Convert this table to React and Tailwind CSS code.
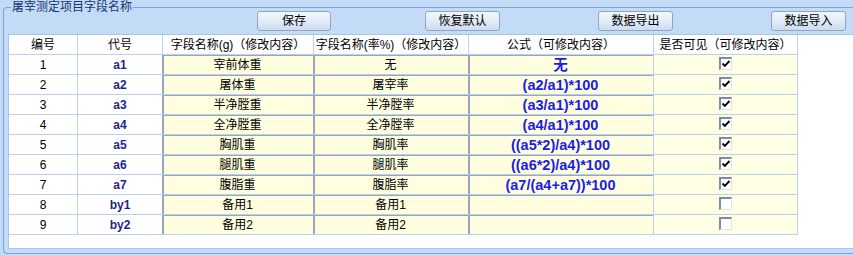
import React from "react";

const rows = [
  { n: "1", code: "a1", g: "宰前体重", r: "无", f: "无", c: true },
  { n: "2", code: "a2", g: "屠体重", r: "屠宰率", f: "(a2/a1)*100", c: true },
  { n: "3", code: "a3", g: "半净膛重", r: "半净膛率", f: "(a3/a1)*100", c: true },
  { n: "4", code: "a4", g: "全净膛重", r: "全净膛率", f: "(a4/a1)*100", c: true },
  { n: "5", code: "a5", g: "胸肌重", r: "胸肌率", f: "((a5*2)/a4)*100", c: true },
  { n: "6", code: "a6", g: "腿肌重", r: "腿肌率", f: "((a6*2)/a4)*100", c: true },
  { n: "7", code: "a7", g: "腹脂重", r: "腹脂率", f: "(a7/(a4+a7))*100", c: true },
  { n: "8", code: "by1", g: "备用1", r: "备用1", f: "", c: false },
  { n: "9", code: "by2", g: "备用2", r: "备用2", f: "", c: false },
];

function Btn({ children, className }) {
  return (
    <div
      className={
        "h-[20px] box-border border border-[#8ea6c6] rounded-[3px] bg-gradient-to-b from-[#f3f7fc] via-[#e2ebf7] to-[#cddcf0] text-[12px] leading-[18px] text-black flex items-center justify-center " +
        className
      }
    >
      {children}
    </div>
  );
}

function Check({ on }) {
  return (
    <div className="w-[13px] h-[13px] box-border bg-white border-l-2 border-t-2 border-r border-b border-l-[#7c8ba6] border-t-[#7c8ba6] border-r-[#e2e2e2] border-b-[#e2e2e2] relative">
      {on && (
        <svg width="11" height="11" viewBox="0 0 11 11" className="absolute left-0 top-0">
          <path d="M1.5 4.5 L3.8 6.8 L8.5 2" fill="none" stroke="#000" strokeWidth="1.9" />
        </svg>
      )}
    </div>
  );
}

const hCell = "h-[20px] box-border border-r border-b border-[#b9d0f0] flex items-center justify-center text-[12px] text-black";

export default function App() {
  return (
    <div
      className="w-[853px] h-[256px] overflow-hidden bg-[#c4dbf8] pt-[7px] pl-[3px]"
      style={{ fontFamily: '"Liberation Sans", "Noto Sans CJK SC", sans-serif' }}
    >
      <div className="relative w-[900px] h-[247px] box-border border-l border-t border-b border-[#7fa3d5] rounded-l-[4px] flex flex-col">
        <div className="absolute left-[7px] -top-[9px] px-[1px] bg-[#c4dbf8] text-[12px] leading-[16px] text-[#15376e]">
          屠宰测定项目字段名称
        </div>
        <div className="mt-[3px] h-[20px] flex">
          <Btn className="ml-[253px] w-[74px]">保存</Btn>
          <Btn className="ml-[94px] w-[75px]">恢复默认</Btn>
          <Btn className="ml-[98px] w-[75px]">数据导出</Btn>
          <Btn className="ml-[98px] w-[75px]">数据导入</Btn>
        </div>
        <div className="mt-[3px] ml-[4px] h-[215px] box-border border-l border-t border-b border-[#a6c4ec] bg-white">
          <div className="flex">
            <div className={hCell + " w-[69px]"}>编号</div>
            <div className={hCell + " w-[85px]"}>代号</div>
            <div className={hCell + " w-[151px]"}>字段名称(g)（修改内容）</div>
            <div className={hCell + " w-[155px]"}>字段名称(率%)（修改内容）</div>
            <div className={hCell + " w-[185px]"}>公式（可修改内容）</div>
            <div className={hCell + " w-[144px]"}>是否可见（可修改内容）</div>
          </div>
          {rows.map((r) => (
            <div key={r.n} className="flex h-[20px]">
              <div className="w-[69px] h-[20px] box-border border-r border-b border-[#b9d0f0] flex items-center justify-center text-[12px] text-black">
                {r.n}
              </div>
              <div className="w-[84px] h-[20px] box-border border-b border-[#b9d0f0] flex items-center justify-center text-[12px] font-bold text-[#1f1f8a]">
                {r.code}
              </div>
              <div className="w-[151px] h-[20px] box-border border-b border-[#b9d0f0] bg-[#ffffe0] shadow-[inset_2px_1px_0_#97a5bf] flex items-center justify-center text-[12px] text-black">
                {r.g}
              </div>
              <div className="w-[155px] h-[20px] box-border border-b border-[#b9d0f0] bg-[#ffffe0] shadow-[inset_2px_1px_0_#97a5bf] flex items-center justify-center text-[12px] text-black">
                {r.r}
              </div>
              <div className="w-[186px] h-[20px] box-border border-r border-b border-[#b9d0f0] bg-[#ffffe0] shadow-[inset_2px_1px_0_#97a5bf] flex items-center justify-center text-[14.5px] font-bold text-[#1c1ce6] leading-[18px]">
                {r.f}
              </div>
              <div className="w-[144px] h-[20px] box-border border-r border-b border-[#b9d0f0] bg-[#ffffe4] flex justify-center pt-[2px]">
                <Check on={r.c} />
              </div>
            </div>
          ))}
        </div>
      </div>
    </div>
  );
}
